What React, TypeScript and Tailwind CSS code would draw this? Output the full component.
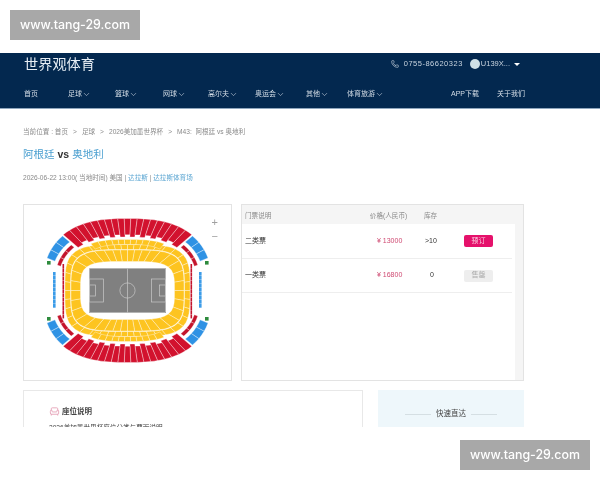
import React from 'react';
import { Armchair, ChevronDown, Phone } from 'lucide-react';

const CX = 103.5;
const CY = 85.5;

const pt = (deg: number, a: number, b: number, n: number) => {
  const t = (deg * Math.PI) / 180;
  const c = Math.cos(t);
  const s = Math.sin(t);
  const r = 1 / Math.pow(Math.pow(Math.abs(c) / a, n) + Math.pow(Math.abs(s) / b, n), 1 / n);
  return `${(CX + r * c).toFixed(2)} ${(CY + r * s).toFixed(2)}`;
};

// one seating block between two angles and two superellipse rings
const block = (d0: number, d1: number, a0: number, b0: number, a1: number, b1: number, n: number) => {
  const m = (d0 + d1) / 2;
  return `M${pt(d0, a0, b0, n)} L${pt(m, a0, b0, n)} L${pt(d1, a0, b0, n)} L${pt(d1, a1, b1, n)} L${pt(m, a1, b1, n)} L${pt(d0, a1, b1, n)}Z`;
};

const ring = (from: number, to: number, count: number, a0: number, b0: number, a1: number, b1: number, n: number, notch = 0) =>
  Array.from({ length: count }, (_, i) => {
    const step = (to - from) / count;
    const k = notch && i % 2 ? 1 + notch : 1;
    return block(from + i * step, from + (i + 1) * step, a0 * k, b0 * k, a1, b1, n);
  });

const redBlocks = [
  ...ring(-139, -41, 19, 68, 53.5, 85, 72, 2.6, 0.04),
  ...ring(41, 139, 19, 68, 53.5, 85, 72, 2.6, 0.04),
];
const blueBlocks = [
  ...ring(-158, -140, 3, 77, 62, 85, 71, 2.6),
  ...ring(-40, -22, 3, 77, 62, 85, 71, 2.6),
  ...ring(22, 40, 3, 77, 62, 85, 71, 2.6),
  ...ring(140, 158, 3, 77, 62, 85, 71, 2.6),
];
const innerRed = [
  ...ring(-160, -141, 3, 70, 56, 73.5, 59.5, 2.6),
  ...ring(-39, -20, 3, 70, 56, 73.5, 59.5, 2.6),
  ...ring(20, 39, 3, 70, 56, 73.5, 59.5, 2.6),
  ...ring(141, 160, 3, 70, 56, 73.5, 59.5, 2.6),
];
const yellowBlocks = [
  ...ring(0, 360, 36, 47, 29, 56.5, 40.5, 4),
  ...ring(0, 360, 44, 57, 41, 62.5, 46, 4),
  ...ring(-128, -52, 11, 50, 46, 60, 51, 3),
  ...ring(52, 128, 11, 50, 46, 60, 51, 3),
];

const StadiumMap = () => (
  <svg viewBox="0 0 207 175" className="block h-[175px] w-[207px]">
    {redBlocks.map((d, i) => <path key={i} d={d} fill="#d2122e" stroke="#fff" strokeWidth="0.35" />)}
    {blueBlocks.map((d, i) => <path key={i} d={d} fill="#2f92e4" stroke="#fff" strokeWidth="0.35" />)}
    {innerRed.map((d, i) => <path key={i} d={d} fill="#c4142c" stroke="#fff" strokeWidth="0.3" />)}
    {yellowBlocks.map((d, i) => <path key={i} d={d} fill="#fdc420" stroke="#fff" strokeWidth="0.35" />)}
    {[23, 181].map((x) => (
      <g key={x}>
        <rect x={x} y="56" width="3.6" height="3.6" fill="#2e8b3d" />
        <rect x={x} y="112" width="3.6" height="3.6" fill="#2e8b3d" />
      </g>
    ))}
    {[29, 175].map((x) =>
      Array.from({ length: 9 }, (_, i) => (
        <rect key={`${x}-${i}`} x={x} y={67 + i * 4} width="2.6" height="3.7" fill="#3c9ce8" />
      )),
    )}
    {[38.5, 166.5].map((x) =>
      Array.from({ length: 13 }, (_, i) => (
        <rect key={`${x}-${i}`} x={x} y={59 + i * 4.2} width="1.6" height="4" fill="#c4142c" />
      )),
    )}
    <rect x="65" y="63" width="77" height="45" fill="#808080" />
    <g fill="none" stroke="#c9c9c9" strokeWidth="0.7">
      <rect x="65.5" y="63.5" width="76" height="44" />
      <path d="M103.5 63.5V107.5" />
      <circle cx="103.5" cy="85.5" r="7.6" />
      <rect x="65.5" y="74" width="14" height="23" />
      <rect x="65.5" y="80" width="6" height="11" />
      <rect x="127.5" y="74" width="14" height="23" />
      <rect x="135.5" y="80" width="6" height="11" />
    </g>
  </svg>
);

const navItems = [
  { label: '首页', w: 'w-[44px]', arrow: false },
  { label: '足球', w: 'w-[47px]', arrow: true },
  { label: '篮球', w: 'w-[48px]', arrow: true },
  { label: '网球', w: 'w-[45px]', arrow: true },
  { label: '高尔夫', w: 'w-[47px]', arrow: true },
  { label: '奥运会', w: 'w-[51px]', arrow: true },
  { label: '其他', w: 'w-[41px]', arrow: true },
  { label: '体育旅游', w: 'w-[104px]', arrow: true },
  { label: 'APP下载', w: 'w-[46px]', arrow: false },
  { label: '关于我们', w: 'w-auto', arrow: false },
];

const Watermark = ({ className }: { className: string }) => (
  <div className={`absolute flex h-[30px] w-[130px] items-center justify-center bg-[#a8a8a8] font-['Inter',sans-serif] text-[12.4px] font-medium text-white ${className}`}>
    www.tang-29.com
  </div>
);

export default function App() {
  return (
    <div className="relative h-[480px] w-[600px] overflow-hidden bg-white font-['Liberation_Sans','Noto_Sans_CJK_SC',sans-serif] blur-[0.3px]">
      <Watermark className="left-[10px] top-[10px]" />
      <Watermark className="left-[460px] top-[440px]" />

      <div className="pt-[53px]">
        <div className="h-[374px] overflow-hidden">
          <header className="h-[56px] border-b border-[#8fa6bd] bg-[#03284f] text-white">
            <div className="flex h-[22px] items-center pl-[24px] pr-[80px]">
              <h1 className="text-[14.2px] leading-none text-[#e6edf4]">世界观体育</h1>
              <div className="ml-auto flex items-center text-[7.5px] tracking-[0.5px] text-[#c8d3de]">
                <Phone size={8} strokeWidth={2} className="mr-[5px]" />
                <span>0755-86620323</span>
                <span className="ml-[7px] mr-[1px] h-[10px] w-[10px] rounded-full bg-[#cfe0e6]" />
                <span className="text-[7.5px] tracking-normal">U139X...</span>
                <span className="ml-[4px] border-x-[3px] border-t-[3px] border-x-transparent border-t-white" />
              </div>
            </div>
            <nav className="mt-[6px] flex h-[27px] items-center pl-[24px] text-[7px] text-[#d5dee7]">
              {navItems.map((item) => (
                <div key={item.label} className={`flex items-center ${item.w}`}>
                  {item.label}
                  {item.arrow && <ChevronDown size={9} strokeWidth={1.5} />}
                </div>
              ))}
            </nav>
          </header>

          <main className="px-[23px] pt-[18px]">
            <div className="flex h-[10px] items-center gap-[5px] text-[6.6px] text-[#8a8a8a]">
              <span>当前位置 : 首页</span>
              <span>&gt;</span>
              <span>足球</span>
              <span>&gt;</span>
              <span>2026美加墨世界杯</span>
              <span>&gt;</span>
              <span>M43:&nbsp; 阿根廷 vs 奥地利</span>
            </div>
            <div className="mt-[11px] flex h-[14px] items-center text-[10.5px] text-[#333]">
              <span className="text-[#4a9fd0]">阿根廷</span>
              <span className="mx-[3px] font-bold">vs</span>
              <span className="text-[#4a9fd0]">奥地利</span>
            </div>
            <div className="mt-[11px] flex h-[10px] items-center text-[6.6px] text-[#8a8a8a]">
              2026-06-22 13:00( 当地时间) 美国 |&nbsp;<span className="text-[#5aa5d2]">达拉斯</span>&nbsp;|&nbsp;<span className="text-[#5aa5d2]">达拉斯体育场</span>
            </div>

            <div className="mt-[21px] flex gap-[9px]">
              <section className="relative h-[177px] w-[209px] border border-[#e3e3e3]">
                <StadiumMap />
                <div className="absolute right-[13px] top-[11px] flex flex-col items-center gap-[2px] text-[11px] leading-[12px] text-[#a0a0a0]">
                  <span>+</span>
                  <span>−</span>
                </div>
              </section>

              <section className="h-[177px] w-[283px] border border-[#e3e3e3] bg-[#f5f5f5] pr-[8px]">
                <div className="flex h-[19px] items-center pt-[2px] text-[6.6px] text-[#8a8a8a]">
                  <span className="w-[120px] pl-[3px]">门票说明</span>
                  <span className="w-[53px] text-center">价格(人民币)</span>
                  <span className="pl-[9px]">库存</span>
                </div>
                <div className="h-[156px] bg-white pr-[3px]">
                  <div className="flex h-[35px] items-center border-b border-[#eee] text-[7px] text-[#333]">
                    <span className="w-[135px] pl-[3px]">二类票</span>
                    <span className="w-[47px] text-[#cf4a72]">¥ 13000</span>
                    <span className="w-[40px] pl-[1px]">&gt;10</span>
                    <button className="h-[12px] w-[29px] rounded-[2px] bg-[#e5116b] text-[7px] text-[#fbd0e2]">预订</button>
                  </div>
                  <div className="flex h-[34px] items-center border-b border-[#eee] text-[7px] text-[#333]">
                    <span className="w-[135px] pl-[3px]">一类票</span>
                    <span className="w-[47px] text-[#cf4a72]">¥ 16800</span>
                    <span className="w-[40px] pl-[6px]">0</span>
                    <button className="h-[12px] w-[29px] rounded-[2px] bg-[#eeeeee] text-[7px] text-[#aaa]">售罄</button>
                  </div>
                </div>
              </section>
            </div>

            <div className="mt-[9px] flex gap-[15px]">
              <section className="h-[60px] w-[340px] border border-[#e8e8e8] pl-[25px] pt-[15px]">
                <div className="flex items-center gap-[2px] text-[7.5px] font-bold text-[#444]">
                  <Armchair size={11} strokeWidth={2} className="text-[#e6a3b8]" />
                  座位说明
                </div>
                <p className="mt-[6px] text-[6.6px] text-[#444]">2026美加墨世界杯座位分类与票面说明</p>
              </section>
              <section className="flex h-[60px] w-[146px] justify-center bg-[#eef7fb] pt-[18px]">
                <div className="flex h-[12px] items-center gap-[3px] text-[7.5px] text-[#444]">
                  <span className="h-px w-[26px] bg-[#d5dfe3]" />
                  <span className="px-[2px]">快速直达</span>
                  <span className="h-px w-[26px] bg-[#d5dfe3]" />
                </div>
              </section>
            </div>
          </main>
        </div>
      </div>
    </div>
  );
}
